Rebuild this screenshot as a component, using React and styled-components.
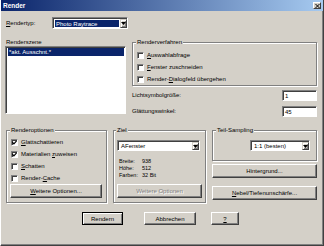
import React from 'react';
import styled, { createGlobalStyle } from 'styled-components';

const face = '#d4d0c8';
const shadow = '#808080';
const dark = '#404040';
const navy = '#0a246a';

const GlobalStyle = createGlobalStyle`
  html, body {
    margin: 0;
    background: ${face};
  }
  body {
    font-family: 'Liberation Sans', Arial, sans-serif;
    font-size: 6px;
    color: #000;
  }
  * {
    box-sizing: border-box;
  }
`;

const Window = styled.div`
  width: 324px;
  height: 246px;
  background: ${face};
  border: 1px solid;
  border-top: none;
  border-color: ${face} ${dark} ${dark} #fff;
  box-shadow: inset -1px -1px 0 ${shadow};
  display: flex;
  flex-direction: column;
`;

const TitleBar = styled.div`
  height: 11px;
  flex: none;
  display: flex;
  align-items: center;
  justify-content: space-between;
  padding: 0 2px;
  background: linear-gradient(to right, ${navy}, #a6caf0);
  color: #fff;
  font-weight: bold;
  font-size: 6.5px;
`;

const CloseButton = styled.div`
  width: 8px;
  height: 7px;
  background: ${face};
  border: 1px solid;
  border-color: #fff ${dark} ${dark} #fff;
  display: flex;
  align-items: center;
  justify-content: center;
`;

const Body = styled.div`
  flex: 1;
  display: flex;
  flex-direction: column;
  padding: 0 6px 0 4px;
`;

const TypeRow = styled.div`
  margin-top: 6px;
  display: flex;
  align-items: center;
`;

const Label = styled.span`
  width: ${p => (p.$w ? `${p.$w}px` : 'auto')};
  padding-left: ${p => p.$pl || 0}px;
  white-space: nowrap;
  line-height: 7px;
`;

const Sunken = styled.div`
  background: #fff;
  border: 1px solid;
  border-color: ${shadow} #fff #fff ${shadow};
  box-shadow: inset 1px 1px 0 ${dark};
`;

const Combo = styled(Sunken)`
  width: ${p => p.$w}px;
  height: ${p => p.$h || 12}px;
  margin-top: ${p => p.$mt || 0}px;
  flex: none;
  display: flex;
  padding: 1px 0 0 1px;
`;

const ComboText = styled.div`
  flex: 1;
  display: flex;
  align-items: center;
  margin: 1px;
  padding-left: 1px;
  background: ${p => (p.$selected ? navy : 'transparent')};
  color: ${p => (p.$selected ? '#fff' : '#000')};
  white-space: nowrap;
  overflow: hidden;
`;

const DropButton = styled.div`
  width: 7px;
  flex: none;
  background: ${face};
  border: 1px solid;
  border-color: ${face} ${dark} ${dark} ${face};
  box-shadow: inset 1px 1px 0 #fff, inset -1px -1px 0 ${shadow};
  display: flex;
  align-items: center;
  justify-content: center;
`;

const MainGrid = styled.div`
  margin-top: 10px;
  display: grid;
  grid-template-columns: 121px 1fr;
  column-gap: 6px;
`;

const Column = styled.div`
  display: flex;
  flex-direction: column;
  align-items: ${p => p.$align || 'stretch'};
`;

const ListBox = styled(Sunken)`
  height: 68px;
  padding: 1px 0 0 1px;
`;

const ListItem = styled.div`
  height: 8px;
  line-height: 8px;
  margin: 0 1px;
  padding-left: 1px;
  background: ${navy};
  color: #fff;
`;

const Group = styled.fieldset`
  margin: 0;
  min-width: 0;
  padding: ${p => p.$pad};
  border: 1px solid ${shadow};
  box-shadow: inset 1px 1px 0 #fff, 1px 1px 0 #fff;
  display: flex;
  flex-direction: column;
`;

const Legend = styled.legend`
  padding: 0 1px;
  margin-left: -1px;
  line-height: 6px;
  background: ${face};
`;

const CheckRow = styled.label`
  height: 12px;
  display: flex;
  align-items: center;
  gap: 3px;
  white-space: nowrap;
`;

const Box = styled(Sunken)`
  width: 7px;
  height: 7px;
  flex: none;
  display: flex;
  align-items: center;
  justify-content: center;
`;

const FieldRow = styled.div`
  margin-top: ${p => p.$mt || 0}px;
  height: 11px;
  display: flex;
  align-items: center;
  justify-content: space-between;
`;

const TextInput = styled(Sunken)`
  width: 35px;
  height: 11px;
  display: flex;
  align-items: center;
  padding-left: 2px;
`;

const LowerGrid = styled.div`
  margin-top: 10px;
  margin-left: 1px;
  display: grid;
  grid-template-columns: 101px 93px 105px;
  column-gap: 6px;
`;

const Info = styled.div`
  margin-top: 7px;
  padding-left: 2px;
  display: grid;
  grid-template-columns: 23px auto;
  font-size: 5.5px;
  line-height: 7px;
`;

const Button = styled.button`
  width: ${p => (p.$w ? `${p.$w}px` : 'auto')};
  height: ${p => p.$h || 14}px;
  margin: ${p => p.$m || 0};
  padding: 0;
  flex: none;
  font: inherit;
  white-space: nowrap;
  color: ${p => (p.disabled ? shadow : '#000')};
  text-shadow: ${p => (p.disabled ? '1px 1px 0 #fff' : 'none')};
  background: ${face};
  border: 1px solid;
  border-color: ${p => (p.$default ? '#000' : `#fff ${dark} ${dark} #fff`)};
  box-shadow: ${p =>
    p.$default
      ? `inset 1px 1px 0 #fff, inset -1px -1px 0 ${shadow}`
      : `inset -1px -1px 0 ${shadow}`};
`;

const Footer = styled.div`
  margin-top: 9px;
  padding-left: 77px;
  display: flex;
`;

const Arrow = () => (
  <svg width="5" height="3" viewBox="0 0 5 3">
    <polygon points="0,0 5,0 2.5,3" fill="#000" />
  </svg>
);

const Check = () => (
  <svg width="5" height="5" viewBox="0 0 5 5">
    <path d="M0.4 2.2 L1.9 3.8 L4.6 0.8" stroke="#000" strokeWidth="1.2" fill="none" />
  </svg>
);

const Checkbox = ({ checked, children }) => (
  <CheckRow>
    <Box>{checked && <Check />}</Box>
    <span>{children}</span>
  </CheckRow>
);

const Select = ({ w, h, mt, selected, children }) => (
  <Combo $w={w} $h={h} $mt={mt}>
    <ComboText $selected={selected}>{children}</ComboText>
    <DropButton>
      <Arrow />
    </DropButton>
  </Combo>
);

const App = () => (
  <>
    <GlobalStyle />
    <Window>
      <TitleBar>
        <span>Render</span>
        <CloseButton>
          <svg width="5" height="4" viewBox="0 0 5 4">
            <path d="M0.5 0 L4.5 4 M4.5 0 L0.5 4" stroke="#000" strokeWidth="1" />
          </svg>
        </CloseButton>
      </TitleBar>

      <Body>
        <TypeRow>
          <Label $w={47} $pl={1}>
            <u>R</u>endertyp:
          </Label>
          <Select w={76} selected>
            Photo Raytrace
          </Select>
        </TypeRow>

        <MainGrid>
          <Column>
            <Label $pl={1}>Renderszene</Label>
            <ListBox>
              <ListItem>*akt. Ausschnt.*</ListItem>
            </ListBox>
          </Column>

          <Column>
            <Group $pad="4px 4px 0 4px">
              <Legend>Renderverfahren</Legend>
              <Checkbox>
                <u>A</u>uswahlabfrage
              </Checkbox>
              <Checkbox>
                <u>F</u>enster zuschneiden
              </Checkbox>
              <Checkbox>
                Render-<u>D</u>ialogfeld übergehen
              </Checkbox>
            </Group>
            <FieldRow $mt={4}>
              <Label>Lichtsymbolgröße:</Label>
              <TextInput>1</TextInput>
            </FieldRow>
            <FieldRow $mt={5}>
              <Label>Glättungswinkel:</Label>
              <TextInput>45</TextInput>
            </FieldRow>
          </Column>
        </MainGrid>

        <LowerGrid>
          <Group $pad="3px 4px 4px 4px">
            <Legend>Renderoptionen</Legend>
            <Checkbox checked>
              <u>G</u>lattschattieren
            </Checkbox>
            <Checkbox checked>
              Materialien <u>z</u>uweisen
            </Checkbox>
            <Checkbox>
              <u>S</u>chatten
            </Checkbox>
            <Checkbox>
              Render-<u>C</u>ache
            </Checkbox>
            <Button $m="auto 0 0 -1px">
              <u>W</u>eitere Optionen...
            </Button>
          </Group>

          <Group $pad="3px 3px 4px 3px">
            <Legend>Ziel</Legend>
            <Select w={83} h={11} mt={4}>
              AFenster
            </Select>
            <Info>
              <span>Breite:</span>
              <span>938</span>
              <span>Höhe:</span>
              <span>512</span>
              <span>Farben:</span>
              <span>32 Bit</span>
            </Info>
            <Button disabled $m="auto 0 0 0">
              Weitere Optionen
            </Button>
          </Group>

          <Column>
            <Group $pad="7px 6px 9px 4px">
              <Legend>Teil-Sampling</Legend>
              <Column $align="flex-end">
                <Select w={60} h={11}>
                  1:1 (besten)
                </Select>
              </Column>
            </Group>
            <Button $m="3px 0 0 0">Hintergrund...</Button>
            <Button $m="auto 0 3px 0">
              <u>N</u>ebel/Tiefenunschärfe...
            </Button>
          </Column>
        </LowerGrid>

        <Footer>
          <Button $default $w={41} $h={13}>
            Rendern
          </Button>
          <Button $w={52} $h={13} $m="0 0 0 21px">
            Abbrechen
          </Button>
          <Button $w={28} $h={13} $m="0 0 0 15px">
            <u>?</u>
          </Button>
        </Footer>
      </Body>
    </Window>
  </>
);

export default App;
